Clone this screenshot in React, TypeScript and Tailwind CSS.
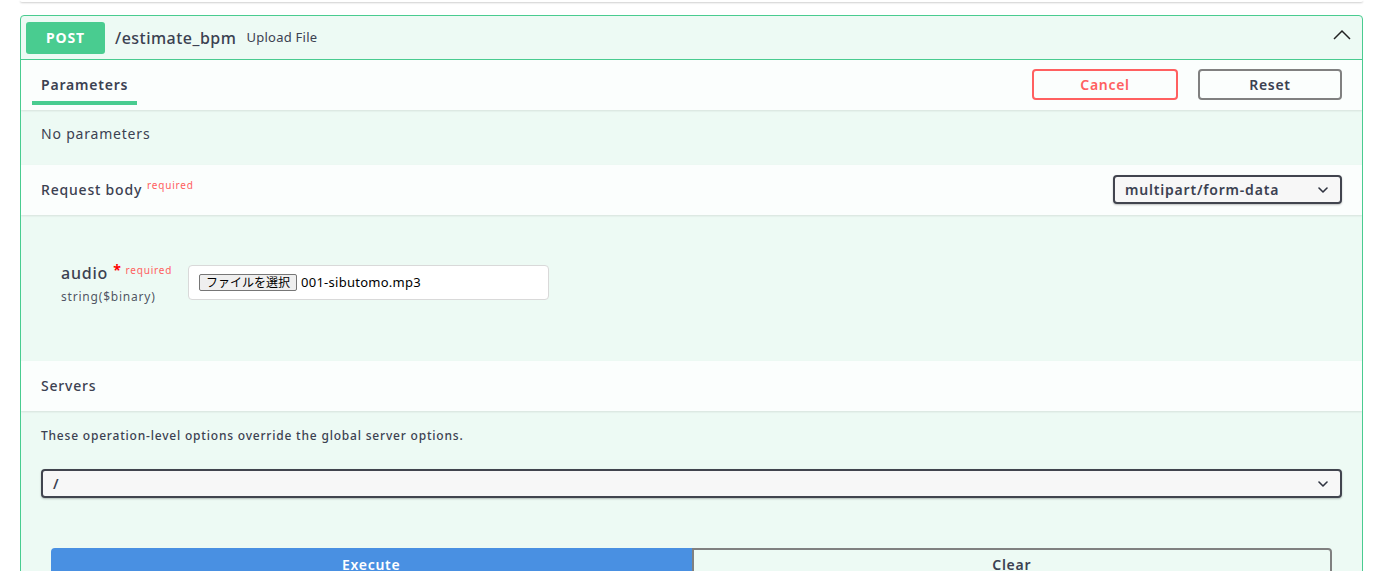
import React from 'react';

const font = { fontFamily: '"Noto Sans", "Noto Sans CJK JP", sans-serif' };

const SmallChevron = () => (
  <svg width="10" height="6" viewBox="0 0 10 6" className="shrink-0">
    <path d="M1 1l4 4 4-4" fill="none" stroke="#2f3340" strokeWidth="1.6" strokeLinecap="round" strokeLinejoin="round" />
  </svg>
);

const SectionHeader: React.FC<{ children: React.ReactNode; right?: React.ReactNode }> = ({ children, right }) => (
  <div className="flex items-center justify-between h-[50px] px-5 bg-white/80 shadow-[0_1px_2px_rgba(0,0,0,0.1)]">
    {children}
    {right}
  </div>
);

export default function App() {
  return (
    <div className="min-h-screen bg-white pl-[20px] pr-[28px] text-[#3b4151] tracking-[0.05em]" style={font}>
      <div className="h-[2px] bg-white shadow-[0_1px_2px_rgba(0,0,0,0.2)] rounded-b" />

      <div className="mt-[13px] border border-[#49cc90] rounded-[4px] bg-[#edfaf4] overflow-hidden">
        {/* summary */}
        <div className="flex items-center h-[44px] px-[5px] border-b border-[#49cc90]">
          <span className="w-[79px] h-[32px] rounded-[3px] bg-[#49cc90] text-white font-bold text-[14px] flex items-center justify-center">
            POST
          </span>
          <span className="ml-[10px] text-[16px] font-medium tracking-[0.03em]">/estimate_bpm</span>
          <span className="ml-[10px] text-[13px] tracking-[0.02em]">Upload File</span>
          <div className="flex-1" />
          <svg width="18" height="11" viewBox="0 0 18 11" className="mr-[6px] -mt-[6px]">
            <polyline points="1,10 9,2 17,10" fill="none" stroke="#222" strokeWidth="1.5" />
          </svg>
        </div>

        {/* parameters */}
        <SectionHeader
          right={
            <div className="flex gap-5 -mt-[2px]">
              <button className="w-[146px] h-[31px] border-2 border-[#ff6060] rounded-[4px] text-[#ff6060] font-semibold text-[14px] bg-transparent tracking-[0.05em]">
                Cancel
              </button>
              <button className="w-[144px] h-[31px] border-2 border-[#808080] rounded-[4px] text-[#3b4151] font-semibold text-[14px] bg-transparent tracking-[0.05em]">
                Reset
              </button>
            </div>
          }
        >
          <div className="relative h-full flex items-center">
            <h4 className="text-[14px] font-semibold -mt-[2px]">Parameters</h4>
            <div className="absolute bottom-[5px] left-[-9px] right-[-9px] h-[4px] bg-[#49cc90]" />
          </div>
        </SectionHeader>
        <div className="h-[55px] px-5 pt-[14px] text-[14px] leading-[20px]">No parameters</div>

        {/* request body */}
        <SectionHeader
          right={
            <div className="w-[229px] h-[29px] border-2 border-[#41444e] rounded-[4px] bg-[#f7f7f7] flex items-center justify-between pl-[10px] pr-[12px] shadow-[0_1px_2px_rgba(0,0,0,0.25)] -mt-[1px]">
              <span className="text-[14px] font-semibold">multipart/form-data</span>
              <SmallChevron />
            </div>
          }
        >
          <h4 className="text-[14px] font-medium -mt-[1px]">
            Request body
            <span className="ml-[5px] relative top-[-6px] text-[10px] font-normal text-[#ff6060]">required</span>
          </h4>
        </SectionHeader>
        <div className="h-[146px] px-[40px] pt-[49px] flex items-start">
          <div className="w-[127px]">
            <div className="flex items-start -mt-[2px]">
              <span className="text-[16px] font-medium leading-[22px]">audio</span>
              <span className="ml-[5px] text-[#ff0000] text-[14px] font-bold leading-[16px]">*</span>
              <span className="ml-[4px] text-[10px] text-[#ff6060] leading-[16px]">required</span>
            </div>
            <div className="mt-[4px] text-[12px] text-[#3b4151]/90">string($binary)</div>
          </div>
          <div className="w-[361px] h-[35px] bg-white border border-[#d9d9d9] rounded-[4px] flex items-center pl-[10px] text-[13px] mt-[1px] tracking-normal">
            <span className="h-[17px] px-[6px] flex items-center border border-[#767676] rounded-[2px] bg-[#efefef] text-black text-[12px]">
              ファイルを選択
            </span>
            <span className="ml-[4px] text-black tracking-[0.02em]">001-sibutomo.mp3</span>
          </div>
        </div>

        {/* servers */}
        <SectionHeader>
          <h4 className="text-[14px] font-medium -mt-[2px]">Servers</h4>
        </SectionHeader>
        <div className="px-5 pt-[16px]">
          <p className="text-[12px] font-medium leading-[18px]">These operation-level options override the global server options.</p>
          <div className="mt-[24px] h-[29px] border-2 border-[#41444e] rounded-[4px] bg-[#f7f7f7] flex items-center justify-between pl-[10px] pr-[12px] shadow-[0_1px_2px_rgba(0,0,0,0.25)]">
            <span className="text-[14px] font-semibold">/</span>
            <SmallChevron />
          </div>
        </div>
        <div className="flex px-[30px] pt-[50px] pb-[10px]">
          <button className="flex-1 h-[40px] bg-[#4990e2] border-2 border-[#4990e2] rounded-l-[4px] text-white font-semibold text-[14px] flex justify-center pt-[4px] tracking-[0.05em]">
            Execute
          </button>
          <button className="flex-1 h-[40px] bg-transparent border-2 border-[#808080] rounded-r-[4px] text-[#3b4151] font-semibold text-[14px] flex justify-center pt-[4px] tracking-[0.05em]">
            Clear
          </button>
        </div>
      </div>
    </div>
  );
}
